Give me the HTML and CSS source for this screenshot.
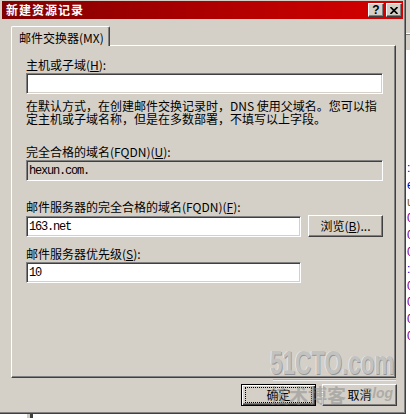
FILE: index.html
```html
<!DOCTYPE html>
<html lang="zh-CN">
<head>
    <meta charset="UTF-8">
    <title>新建资源记录</title>
    <link rel="stylesheet" href="styles.css">
</head>
<body>

    <div class="desk-left">
        <div class="window">
            <div class="titlebar">
                <span class="title">新建资源记录</span>
                <div class="cap-btns">
                    <span class="cap-btn help">?</span>
                    <span class="cap-btn">
                        <svg width="8" height="7" viewBox="0 0 8 7">
                            <path d="M0.5 0 L7.5 7 M7.5 0 L0.5 7" stroke="#000" stroke-width="1.6"/>
                        </svg>
                    </span>
                </div>
            </div>

            <div class="tabs">
                <div class="tab">邮件交换器(MX)</div>
            </div>

            <div class="panel">
                <label class="field-label">主机或子域(<u>H</u>):</label>
                <input class="edit" type="text" value="">

                <p class="hint">在默认方式，在创建邮件交换记录时，DNS 使用父域名。您可以指<br>定主机或子域名称，但是在多数部署，不填写以上字段。</p>

                <label class="field-label gap-lg">完全合格的域名(FQDN)(<u>U</u>):</label>
                <input class="edit" type="text" value="hexun.com." disabled>

                <label class="field-label gap-md">邮件服务器的完全合格的域名(FQDN)(<u>F</u>):</label>
                <div class="row">
                    <input class="edit short" type="text" value="163.net">
                    <button class="btn">浏览(<u>B</u>)...</button>
                </div>

                <label class="field-label gap-sm">邮件服务器优先级(<u>S</u>):</label>
                <input class="edit short" type="text" value="10">
            </div>

            <div class="actions">
                <button class="btn default"><span class="focus">确定</span></button>
                <button class="btn">取消</button>
            </div>

            <!-- watermark sitting over the screenshot -->
            <div class="watermark">
                <div class="wm-logo">51CTO.com</div>
                <div class="wm-rule"></div>
                <div class="wm-blog">技术博客<span class="wm-en">Blog</span></div>
            </div>
        </div>
        <div class="bd-bottom"><div class="stub"></div></div>
    </div>

    <div class="backdrop">
        <div class="bd-head"></div>
        <div class="bd-head2"></div>
        <div class="bd-list">
            <div class="bd-row blue">:</div>
            <div class="bd-row blue">e</div>
            <div class="bd-row olive">u</div>
            <div class="bd-row">0</div>
            <div class="bd-row">0</div>
            <div class="bd-row">0</div>
            <div class="bd-row blue">:</div>
            <div class="bd-row">0</div>
            <div class="bd-row">0</div>
            <div class="bd-row">0</div>
            <div class="bd-row">0</div>
        </div>
    </div>

</body>
</html>
```

FILE: styles.css
```css
body {
    margin: 0;
    width: 410px;
    height: 418px;
    overflow: hidden;
    display: flex;
    background-color: #fff;
    font-family: "Noto Sans CJK SC", sans-serif;
    font-size: 12px;
    color: #000;
}

.desk-left {
    display: flex;
    flex-direction: column;
}

/* Classic dialog frame */
.window {
    position: relative;
    width: 406px;
    height: 414px;
    box-sizing: border-box;
    padding: 1px 2px 0 2px;
    background-color: #d4d0c8;
    border-right: 1px solid #404040;
    border-bottom: 1px solid #404040;
    box-shadow: inset -1px -1px #808080;
}

.titlebar {
    height: 18px;
    display: flex;
    align-items: center;
    padding-left: 4px;
    background: linear-gradient(to right, #800000, #d80000);
}

.title {
    flex: 1;
    color: #fff;
    font-weight: bold;
    letter-spacing: 1px;
    line-height: 18px;
}

.cap-btns {
    display: flex;
    gap: 2px;
    margin-right: 1px;
}

.cap-btn {
    width: 16px;
    height: 14px;
    box-sizing: border-box;
    display: flex;
    align-items: center;
    justify-content: center;
    background-color: #d4d0c8;
    border: 1px solid;
    border-color: #fff #404040 #404040 #fff;
    box-shadow: inset -1px -1px #808080;
}

.cap-btn.help {
    font: bold 12px "Liberation Sans", sans-serif;
    line-height: 12px;
}

/* Tab strip */
.tabs {
    position: relative;
    z-index: 1;
    height: 19px;
    margin: 7px 0 0 9px;
}

.tab {
    width: 99px;
    height: 20px;
    box-sizing: border-box;
    padding: 4px 0 0 7px;
    line-height: 14px;
    background-color: #d4d0c8;
    border-top: 1px solid #fff;
    border-left: 1px solid #fff;
    border-right: 1px solid #404040;
    border-radius: 2px 2px 0 0;
    box-shadow: inset -1px 0 #808080;
}

.panel {
    width: 385px;
    height: 333px;
    box-sizing: border-box;
    margin-left: 9px;
    padding: 12px 0 0 14px;
    border-top: 1px solid #fff;
    border-left: 1px solid #fff;
    border-right: 1px solid #404040;
    border-bottom: 1px solid #404040;
    box-shadow: inset -1px -1px #808080;
}

.field-label {
    display: block;
    line-height: 14px;
    margin-bottom: 1px;
}

.gap-lg { margin-top: 20px; }
.gap-md { margin-top: 19px; }
.gap-sm { margin-top: 10px; }

/* Sunken edit box */
.edit {
    display: block;
    width: 357px;
    height: 21px;
    box-sizing: border-box;
    margin: 0;
    padding: 0 2px;
    background-color: #fff;
    border: 1px solid;
    border-color: #808080 #fff #fff #808080;
    box-shadow: inset 1px 1px #404040, inset -1px -1px #d4d0c8;
    font-family: "Liberation Mono", monospace;
    font-size: 12px;
    letter-spacing: -1.2px;
    color: #000;
    outline: none;
}

.edit:disabled {
    background-color: #d4d0c8;
    color: #000;
}

.edit.short {
    width: 275px;
}

.hint {
    margin: 5px 0 0;
    line-height: 13px;
}

.row {
    display: flex;
    align-items: flex-start;
    gap: 7px;
}

.row .edit {
    margin-top: 1px;
}

/* Push buttons */
.btn {
    width: 75px;
    height: 22px;
    box-sizing: border-box;
    padding: 0;
    background-color: #d4d0c8;
    border: 1px solid;
    border-color: #fff #404040 #404040 #fff;
    box-shadow: inset -1px -1px #808080;
    font-family: "Noto Sans CJK SC", sans-serif;
    font-size: 12px;
    line-height: 14px;
    color: #000;
}

.btn.default {
    border: 1px solid #000;
    box-shadow: inset 1px 1px #fff, inset -1px -1px #404040, inset -2px -2px #808080;
}

.focus {
    display: block;
    height: 14px;
    margin: 0 3px;
    border: 1px dotted #000;
}

.actions {
    display: flex;
    justify-content: flex-end;
    gap: 6px;
    margin: 6px 6px 0 0;
}

/* 51CTO watermark over the dialog corner */
.watermark {
    position: absolute;
    left: 270px;
    top: 347px;
    width: 130px;
    pointer-events: none;
}

.wm-logo {
    font: bold 34px "Liberation Sans", sans-serif;
    line-height: 30px;
    color: #c2c2c0;
    text-shadow: 1px 1px 0 #979797, -1px 0 0 #ececec;
    transform: scaleX(0.66);
    transform-origin: left;
    white-space: nowrap;
}

.wm-rule {
    width: 123px;
    height: 1px;
    margin: 2px 0 0 3px;
    background-color: #aaa;
    border-bottom: 1px solid #eee;
}

.wm-blog {
    margin-top: 3px;
    font-size: 19px;
    font-weight: bold;
    line-height: 22px;
    color: rgba(135, 135, 135, 0.5);
    white-space: nowrap;
}

.wm-en {
    position: relative;
    top: -5px;
    margin-left: 16px;
    font: italic bold 14px "Liberation Sans", sans-serif;
}

/* Window behind the dialog */
.backdrop {
    width: 4px;
    height: 418px;
    overflow: hidden;
    background-color: #fff;
}

.bd-head {
    height: 33px;
    background-color: #d4d0c8;
    border-bottom: 1px solid #fff;
}

.bd-head2 {
    height: 15px;
    background-color: #d4d0c8;
    border-top: 1px solid #808080;
}

.bd-list {
    padding-top: 110px;
    padding-left: 1px;
}

.bd-row {
    font: 12px "Liberation Sans", sans-serif;
    line-height: 16.8px;
    color: #800080;
}

.bd-row.blue { color: #0000c0; }
.bd-row.olive { color: #806000; }

.bd-bottom {
    height: 4px;
}

.stub {
    width: 6px;
    height: 4px;
    margin-left: 27px;
    background: linear-gradient(to right, #d4d0c8 50%, #404040 50%);
}
```
